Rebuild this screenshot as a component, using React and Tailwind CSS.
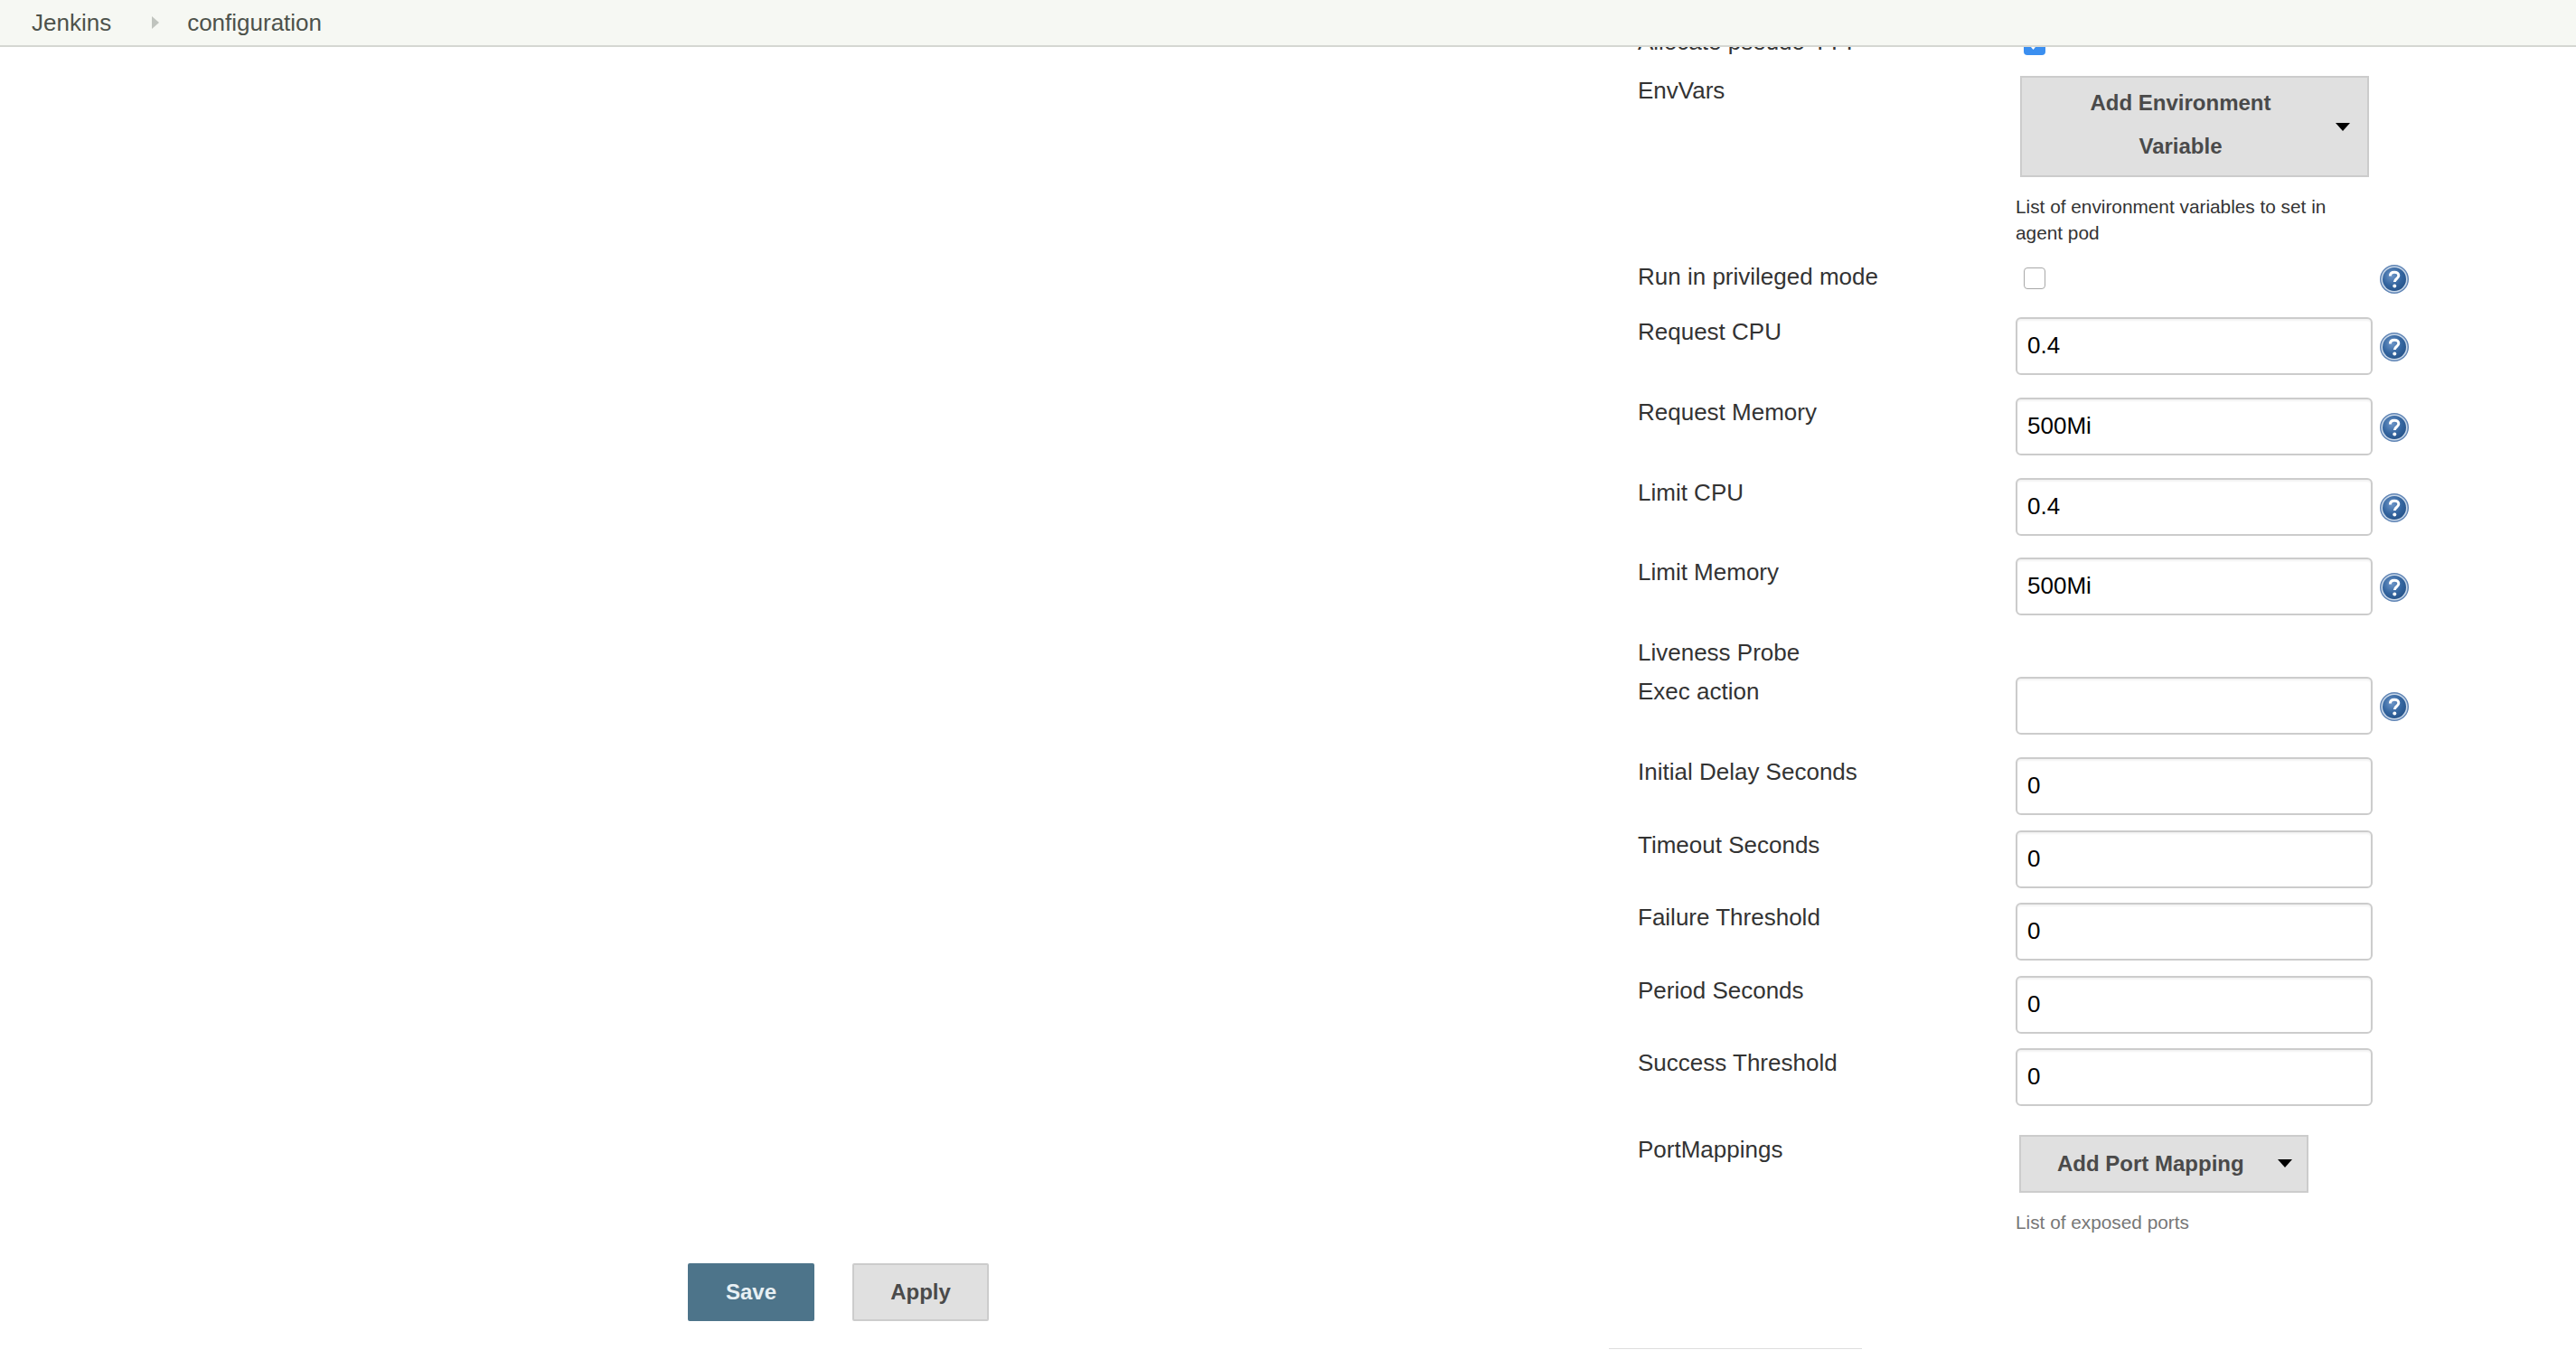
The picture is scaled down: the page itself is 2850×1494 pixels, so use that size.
import React from "react";

function Help() {
  return (
    <svg width="32" height="32" viewBox="0 0 32 32" className="shrink-0 block">
      <defs>
        <radialGradient id="hb" cx="40%" cy="35%" r="70%">
          <stop offset="0%" stopColor="#6f97c9" />
          <stop offset="60%" stopColor="#34659f" />
          <stop offset="100%" stopColor="#265389" />
        </radialGradient>
      </defs>
      <circle cx="16" cy="16" r="16" fill="#5f84b5" />
      <circle cx="16" cy="16" r="14.6" fill="#c9d8e9" />
      <circle cx="16" cy="16" r="13" fill="url(#hb)" />
      <path d="M11.4 12.4c0-2.8 2.1-4.2 4.7-4.2 2.7 0 4.7 1.5 4.7 3.9 0 3.4-4.5 3.4-4.5 6.8" fill="none" stroke="#fff" strokeWidth="3" />
      <circle cx="16.3" cy="23.4" r="2" fill="#fff" />
    </svg>
  );
}

function Label({ children }) {
  return <div className="w-[418px] shrink-0 text-[26px] leading-[32px] text-[#333]">{children}</div>;
}

function Field({ label, value, help, gap }) {
  return (
    <div className={`flex items-start h-[64px] ${gap}`}>
      <Label>{label}</Label>
      <div className="w-[395px] h-[64px] shrink-0 border-2 border-[#ccc] rounded-[6px] bg-white shadow-[inset_0_2px_2px_rgba(0,0,0,0.05)] pl-[11px] flex items-center pb-[2px] text-[26px] leading-[32px] text-black">
        {value}
      </div>
      {help && (
        <div className="ml-[8px] mt-[17px]">
          <Help />
        </div>
      )}
    </div>
  );
}

function Caret() {
  return <span className="block w-0 h-0 border-l-[8px] border-r-[8px] border-t-[9px] border-l-transparent border-r-transparent border-t-black" />;
}

export default function App() {
  return (
    <div className="relative h-[1494px] overflow-hidden bg-white flex font-['Liberation_Sans',Arial,sans-serif]">
      <header className="absolute top-0 left-0 right-0 h-[52px] bg-[#f6f8f3] border-b-2 border-[#d5d7d2] flex items-center pl-[35px] text-[26px] text-[#4d524b]">
        <span>Jenkins</span>
        <span className="ml-[45px] w-0 h-0 border-y-[7px] border-l-[8px] border-y-transparent border-l-[#c0c4be]" />
        <span className="ml-[31px]">configuration</span>
      </header>

      <aside className="w-[1780px] shrink-0 flex items-end gap-[42px] pl-[761px] pb-[32px]">
        <button className="w-[140px] h-[64px] rounded-[2px] bg-[#4d748a] text-[24px] font-bold text-[#e8f0f4]">Save</button>
        <button className="w-[151px] h-[64px] rounded-[2px] bg-[#e0e0e0] border-2 border-[#ccc] text-[24px] font-bold text-[#4a4a4a]">Apply</button>
      </aside>

      <main className="flex-1 flex flex-col pt-[30px]">
        <div className="pl-[32px]">
          <div className="flex h-[54px]">
            <Label>Allocate pseudo-TTY</Label>
            <span className="ml-[9px] mt-[7px] w-[24px] h-[24px] rounded-[4px] bg-[#3b8ff0] flex items-center justify-center">
              <svg width="16" height="16" viewBox="0 0 16 16"><path d="M3 8l3.5 4L13 4" fill="none" stroke="#fff" strokeWidth="2.6" /></svg>
            </span>
          </div>

          <div className="flex h-[206px]">
            <Label>EnvVars</Label>
            <div className="w-[395px]">
              <button className="ml-[5px] w-[386px] h-[112px] bg-[#e0e0e0] border-2 border-[#ccc] flex items-center text-[24px] font-bold leading-[48px] text-[#4a4a4a]">
                <span className="flex-1 text-center pl-[28px] pr-[24px] pb-[4px]">Add Environment<br />Variable</span>
                <span className="mr-[19px]"><Caret /></span>
              </button>
              <p className="mt-[18px] w-[360px] text-[20.8px] leading-[29px] text-[#333]">List of environment variables to set in agent pod</p>
            </div>
          </div>

          <div className="flex h-[61px]">
            <Label>Run in privileged mode</Label>
            <div className="w-[395px] pl-[9px] pt-[6px]">
              <span className="block w-[24px] h-[24px] rounded-[4px] border border-[#a8a8a8] bg-white" />
            </div>
            <div className="ml-[8px] pt-[3px]"><Help /></div>
          </div>

          <Field label="Request CPU" value="0.4" help gap="mb-[25px]" />
          <Field label="Request Memory" value="500Mi" help gap="mb-[25px]" />
          <Field label="Limit CPU" value="0.4" help gap="mb-[24px]" />
          <Field label="Limit Memory" value="500Mi" help gap="mb-[25px]" />

          <div className="h-[43px] text-[26px] leading-[32px] text-[#333]">Liveness Probe</div>

          <Field label="Exec action" value="" help gap="mb-[25px]" />
          <Field label="Initial Delay Seconds" value="0" gap="mb-[17px]" />
          <Field label="Timeout Seconds" value="0" gap="mb-[16px]" />
          <Field label="Failure Threshold" value="0" gap="mb-[17px]" />
          <Field label="Period Seconds" value="0" gap="mb-[16px]" />
          <Field label="Success Threshold" value="0" gap="mb-[32px]" />

          <div className="flex">
            <Label>PortMappings</Label>
            <div>
              <button className="ml-[4px] w-[320px] h-[64px] bg-[#e0e0e0] border-2 border-[#ccc] flex items-center pb-[1px] text-[24px] font-bold text-[#4a4a4a]">
                <span className="ml-[40px]">Add Port Mapping</span>
                <span className="ml-[37px]"><Caret /></span>
              </button>
              <p className="mt-[18px] text-[20.8px] leading-[29px] text-[#777]">List of exposed ports</p>
            </div>
          </div>
        </div>
        <div className="mt-auto mb-[1px] w-[280px] h-[1px] bg-[#ddd]" />
      </main>
    </div>
  );
}
